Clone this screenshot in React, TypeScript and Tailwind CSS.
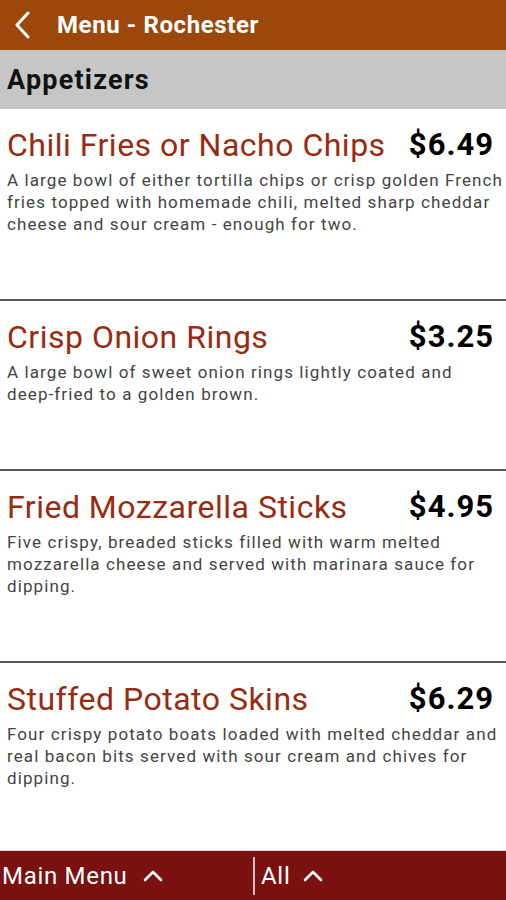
import React from 'react';

interface MenuItem {
  name: string;
  price: string;
  description: React.ReactNode;
}

const items: MenuItem[] = [
  {
    name: 'Chili Fries or Nacho Chips',
    price: '$6.49',
    description:
      'A large bowl of either tortilla chips or crisp golden French fries topped with homemade chili, melted sharp cheddar cheese and sour cream - enough for two.',
  },
  {
    name: 'Crisp Onion Rings',
    price: '$3.25',
    description: (
      <>
        A large bowl of sweet onion rings lightly coated and <span className="whitespace-nowrap">deep-fried</span> to a golden brown.
      </>
    ),
  },
  {
    name: 'Fried Mozzarella Sticks',
    price: '$4.95',
    description:
      'Five crispy, breaded sticks filled with warm melted mozzarella cheese and served with marinara sauce for dipping.',
  },
  {
    name: 'Stuffed Potato Skins',
    price: '$6.29',
    description:
      'Four crispy potato boats loaded with melted cheddar and real bacon bits served with sour cream and chives for dipping.',
  },
];

const ChevronUp: React.FC<{ className?: string }> = ({ className }) => (
  <svg viewBox="0 0 20 14" className={className} fill="none" stroke="white" strokeWidth="2.6" strokeLinecap="round" strokeLinejoin="round">
    <path d="M2 11 L10 3 L18 11" />
  </svg>
);

export default function App() {
  return (
    <div className="w-[506px] h-[900px] flex flex-col bg-white overflow-hidden font-['Roboto',sans-serif]">
      {/* Barra superior */}
      <div className="h-[50px] shrink-0 bg-[#9c480c] flex items-center">
        <svg viewBox="0 0 20 28" className="w-[20px] h-[28px] ml-[12px]" fill="none" stroke="white" strokeWidth="3" strokeLinecap="round" strokeLinejoin="round">
          <path d="M16 2 L5 14 L16 26" />
        </svg>
        <span className="ml-[25px] text-[24px] font-bold text-white leading-none tracking-[0.6px]">Menu - Rochester</span>
      </div>

      {/* Categoria */}
      <div className="h-[59px] shrink-0 bg-[#c6c6c6] flex items-center pl-[7px]">
        <span className="text-[27px] font-bold text-[#111] leading-none mt-[2px] tracking-[1.2px]">Appetizers</span>
      </div>

      {/* Lista de itens */}
      <div className="flex-1 min-h-0 overflow-hidden">
        {items.map((item, i) => (
          <div key={item.name} className={i > 0 ? 'border-t-2 border-[#5a5a5a]' : ''}>
            <div className="pt-[16px] pb-[64px]">
              <div className="flex items-center justify-between pl-[7px] pr-[12px] h-[40px]">
                <span className="text-[32px] text-[#9a2a10] leading-[40px] whitespace-nowrap tracking-[0.5px]">{item.name}</span>
                <span className="text-[31px] font-bold text-black leading-[40px] tracking-[1px]">{item.price}</span>
              </div>
              <p className="mt-[4px] pl-[7px] text-[17px] leading-[22px] text-[#444] tracking-[1.1px]">{item.description}</p>
            </div>
          </div>
        ))}
      </div>

      {/* Barra inferior */}
      <div className="h-[50px] shrink-0 bg-[#7a1010] border-t border-[#d8d8d8] flex items-center">
        <div className="w-[253px] flex items-center pl-[2px]">
          <span className="text-[24px] text-white leading-none tracking-[0.7px]">Main Menu</span>
          <ChevronUp className="w-[20px] h-[14px] ml-[15px]" />
        </div>
        <div className="w-[2px] h-[38px] bg-[#d0c0c0]" />
        <div className="flex items-center pl-[6px]">
          <span className="text-[24px] text-white leading-none tracking-[0.7px]">All</span>
          <ChevronUp className="w-[20px] h-[14px] ml-[13px]" />
        </div>
      </div>
    </div>
  );
}
